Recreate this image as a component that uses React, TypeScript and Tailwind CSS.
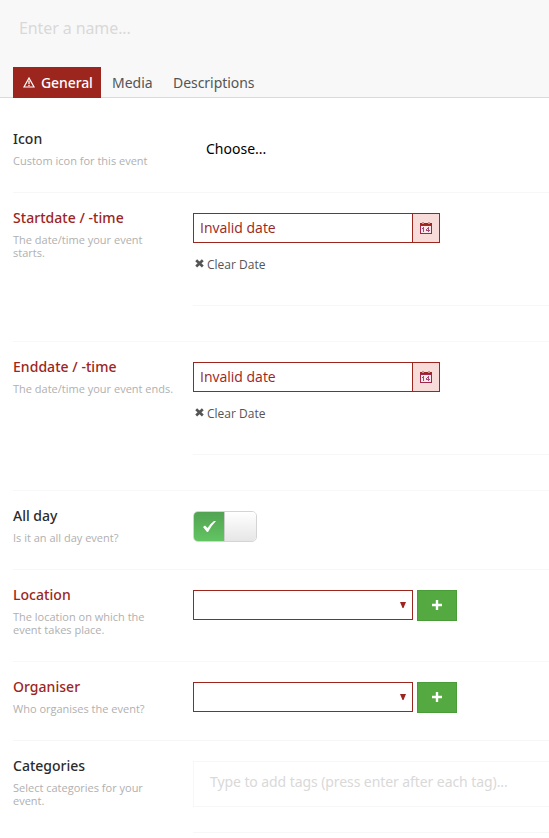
import type { ReactNode } from 'react';

type RowProps = {
  label: string;
  help: ReactNode;
  error?: boolean;
  height: string;
  children: ReactNode;
};

function Row({ label, help, error, height, children }: RowProps) {
  return (
    <section className={`ml-[13px] flex border-b border-[#f7f7f7] ${height}`}>
      <div className="w-[180px] shrink-0 pt-[15px]">
        <h3 className={`text-[14px] leading-5 font-medium ${error ? 'tracking-[0.04px] text-[#9c261d]' : 'text-[#2b2b2b]'}`}>{label}</h3>
        <p className="mt-[5px] font-['Open_Sans',sans-serif] text-[11px] leading-[13px] whitespace-nowrap text-[#b0b0b0]">{help}</p>
      </div>
      <div className="min-w-0 flex-1 pt-5">{children}</div>
    </section>
  );
}

function CalendarIcon() {
  return (
    <svg className="-ml-px" width="12" height="12" viewBox="0 0 12 12" shapeRendering="crispEdges">
      <path d="M0 1h12v11H0z" fill="#a2264b" />
      <path d="M0 1h12v2H0z" fill="#9c261d" />
      <path d="M2 0h2v2H2zM8 0h2v2H8z" fill="#c98f8c" />
      <path d="M1 4h10v7H1z" fill="#fbe9e9" />
      <path d="M3 5h1v5H3zM2 6h1v1H2zM6 7h1v1H6zM7 6h1v1H7zM8 5h1v5H8zM6 8h4v1H6z" fill="#a5487a" />
    </svg>
  );
}

function DateField() {
  return (
    <>
      <div className="flex h-[30px] w-[247px] border border-[#9c261d]">
        <div className="flex-1 pl-[6px] font-['Open_Sans',sans-serif] text-[14px] leading-7 text-[#9c261d]">Invalid date</div>
        <button className="flex w-[27px] items-center justify-center border-l border-[#9c261d] bg-[#f8dcda]">
          <CalendarIcon />
        </button>
      </div>
      <div className="flex h-[63px] border-b border-[#f7f7f7] pt-3">
        <svg className="mt-[4px] ml-[2px]" width="9" height="9" viewBox="0 0 9 9">
          <path d="M1.2 1.2l6.6 6.2M7.8 1.2l-6.6 6.2" stroke="#555" strokeWidth="2.7" />
        </svg>
        <span className="ml-[3px] font-['Open_Sans',sans-serif] text-[12px] leading-5 text-[#555]">Clear Date</span>
      </div>
    </>
  );
}

function SelectField() {
  return (
    <div className="flex gap-1">
      <div className="flex h-[30px] w-[220px] items-center justify-end border border-[#9c261d] pr-[6px]">
        <svg width="6" height="6" viewBox="0 0 6 6">
          <path d="M0 0h6L3.5 6h-1z" fill="#9c261d" />
        </svg>
      </div>
      <button className="flex h-[31px] w-10 items-center justify-center border border-[#4a9c39] bg-[#54a940]">
        <svg className="-mt-px" width="10" height="10" viewBox="0 0 10 10">
          <path d="M3.8 0h2.4v3.8H10v2.4H6.2V10H3.8V6.2H0V3.8h3.8z" fill="#fff" />
        </svg>
      </button>
    </div>
  );
}

export default function App() {
  return (
    <main className="h-[838px] w-[549px] overflow-hidden bg-white font-['Noto_Sans',sans-serif]">
      <header className="flex h-[98px] flex-col bg-[#f8f8f8] shadow-[inset_0_-1px_0_#dadada]">
        <div className="h-[67px] shrink-0 pt-4 pl-[19px] text-[16px] leading-6 tracking-[-0.1px] text-[#d9d9d9]">Enter a name...</div>
        <nav className="ml-[13px] flex h-[31px] shrink-0 text-[14px] leading-[31px] text-[#555]">
          <div className="flex w-[88px] items-center bg-[#9c261d] pl-[10px] font-medium text-white">
            <svg width="12" height="11" viewBox="0 0 12 11">
              <path d="M6 1L1 10h10z" fill="none" stroke="#fff" strokeWidth="1.2" />
              <path d="M6 3.5v3.7M6 8v1.2" stroke="#fff" strokeWidth="1.3" />
            </svg>
            <span className="ml-[6px] tracking-[-0.1px]">General</span>
          </div>
          <span className="ml-[11px] w-[61px]">Media</span>
          <span className="tracking-[-0.05px]">Descriptions</span>
        </nav>
      </header>
      <div className="pt-4">
        <Row label="Icon" help="Custom icon for this event" height="h-[79px]">
          <span className="ml-[13px] block pt-[5px] text-[14px] leading-5 text-black">Choose...</span>
        </Row>
        <Row label="Startdate / -time" help={<>The date/time your event<br />starts.</>} error height="h-[149px]">
          <DateField />
        </Row>
        <Row label="Enddate / -time" help="The date/time your event ends." error height="h-[149px]">
          <DateField />
        </Row>
        <Row label="All day" help="Is it an all day event?" height="h-[79px]">
          <div className="flex h-[31px] w-[64px] overflow-hidden rounded-[5px] border border-[#d4d4d4]">
            <div className="flex w-[30px] items-center justify-center bg-linear-to-b from-[#51a351] to-[#62c462]">
              <svg className="-mt-px" width="13" height="11" viewBox="0 0 13 11">
                <path d="M0 6l2-1.5L4.5 7 Q7 3 11 0h2Q8 5 5 11H4z" fill="#fff" />
              </svg>
            </div>
            <div className="flex-1 border-l border-[#ccc] bg-linear-to-b from-white to-[#e6e6e6]" />
          </div>
        </Row>
        <Row label="Location" help={<>The location on which the<br />event takes place.</>} error height="h-[92px]">
          <SelectField />
        </Row>
        <Row label="Organiser" help="Who organises the event?" error height="h-[79px]">
          <SelectField />
        </Row>
        <Row label="Categories" help={<>Select categories for your<br />event.</>} height="h-[128px]">
          <div className="h-[72px] border-b border-[#f7f7f7]">
            <div className="h-[46px] border border-r-0 border-[#f7f7f7] pt-[9px] pl-4 text-[14px] leading-[22px] tracking-[-0.08px] text-[#d9d9d9]">Type to add tags (press enter after each tag)...</div>
          </div>
        </Row>
      </div>
    </main>
  );
}
